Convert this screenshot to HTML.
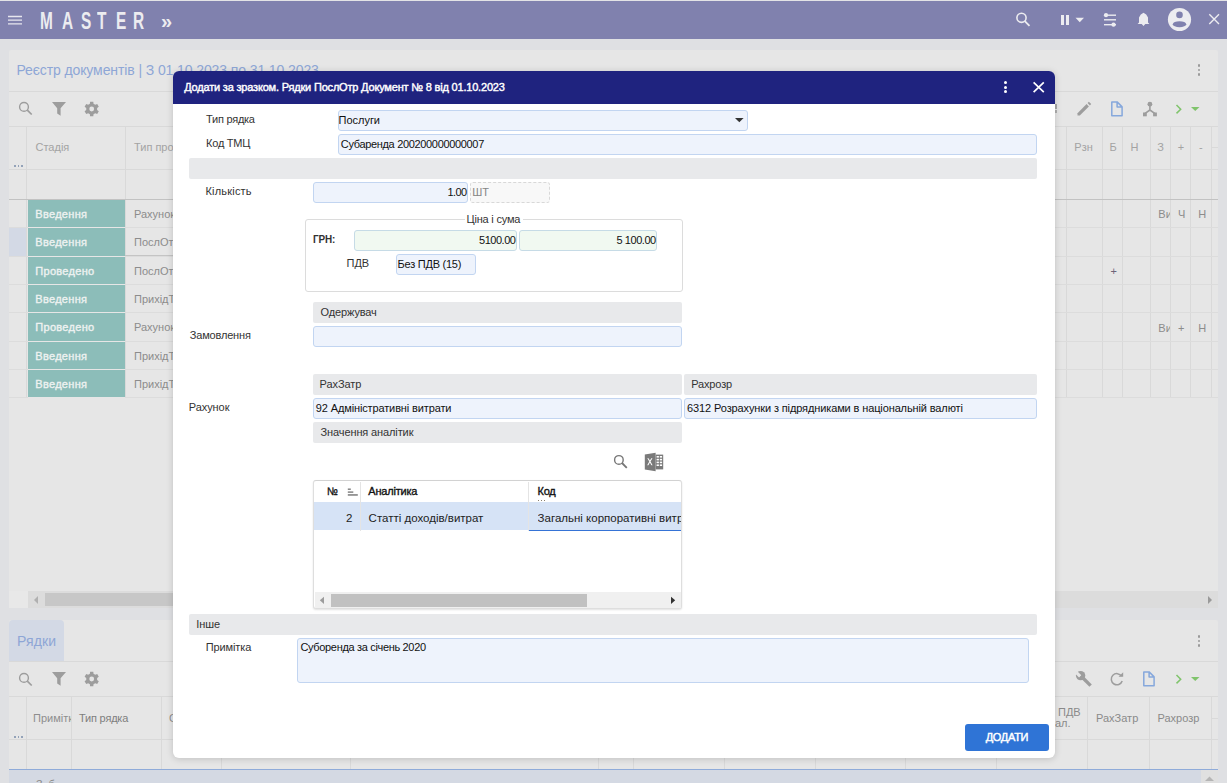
<!DOCTYPE html>
<html><head><meta charset="utf-8"><style>
html,body{margin:0;padding:0;width:1227px;height:783px;overflow:hidden;background:#dfe0e3;}
body{position:relative;font-family:"Liberation Sans",sans-serif;}
.r{position:absolute;display:block}
.t{position:absolute;white-space:nowrap;line-height:20px;font-family:"Liberation Sans",sans-serif}
</style></head><body>
<div class="r" style="left:0;top:0;width:1227px;height:1px;background:#e3e3e6"></div>
<div class="r" style="left:0px;top:1px;width:1227px;height:38px;background:#8081ae;"></div>
<svg class="r" style="left:8px;top:14px;" width="14" height="12" viewBox="0 0 14 12"><path d="M0 2.5H14M0 6.1H14M0 9.8H14" stroke="#e6e6ee" stroke-width="1.3"/></svg>
<div class="t" style="left:39.8px;top:8px;font-size:23px;line-height:26px;font-weight:bold;color:#ececf0;transform:scaleX(0.67);transform-origin:0 0">M</div>
<div class="t" style="left:61.8px;top:8px;font-size:23px;line-height:26px;font-weight:bold;color:#ececf0;transform:scaleX(0.67);transform-origin:0 0">A</div>
<div class="t" style="left:80.5px;top:8px;font-size:23px;line-height:26px;font-weight:bold;color:#ececf0;transform:scaleX(0.67);transform-origin:0 0">S</div>
<div class="t" style="left:97.2px;top:8px;font-size:23px;line-height:26px;font-weight:bold;color:#ececf0;transform:scaleX(0.67);transform-origin:0 0">T</div>
<div class="t" style="left:115.60000000000001px;top:8px;font-size:23px;line-height:26px;font-weight:bold;color:#ececf0;transform:scaleX(0.67);transform-origin:0 0">E</div>
<div class="t" style="left:133.3px;top:8px;font-size:23px;line-height:26px;font-weight:bold;color:#ececf0;transform:scaleX(0.67);transform-origin:0 0">R</div>
<div class="t" style="left:161px;top:10px;font-size:20px;line-height:22px;font-weight:bold;color:#ececf0;">&raquo;</div>
<svg class="r" style="left:1014px;top:11px;" width="18" height="17" viewBox="0 0 18 17"><circle cx="7.5" cy="6.8" r="4.6" fill="none" stroke="#ececf0" stroke-width="1.6"/><line x1="10.8" y1="10.2" x2="15.5" y2="14.8" stroke="#ececf0" stroke-width="1.8"/></svg>
<div class="r" style="left:1061px;top:15.2px;width:3px;height:9.5px;background:#ececf0;"></div>
<div class="r" style="left:1066px;top:15.2px;width:3px;height:9.5px;background:#ececf0;"></div>
<svg class="r" style="left:1075px;top:17px;" width="10" height="6" viewBox="0 0 10 6"><polygon points="0.5,0.8 9,0.8 4.75,5.2" fill="#ececf0"/></svg>
<svg class="r" style="left:1102px;top:12px;" width="16" height="15" viewBox="0 0 16 15"><line x1="2" y1="3.2" x2="14" y2="3.2" stroke="#ececf0" stroke-width="1.4"/><line x1="2" y1="7.8" x2="14" y2="7.8" stroke="#ececf0" stroke-width="1.4"/><line x1="2" y1="12.7" x2="14" y2="12.7" stroke="#ececf0" stroke-width="1.4"/><circle cx="4" cy="3.2" r="2.1" fill="#ececf0"/><circle cx="11.5" cy="12.7" r="2.1" fill="#ececf0"/></svg>
<svg class="r" style="left:1136px;top:11px;" width="15" height="17" viewBox="0 0 15 17"><path d="M7.5 1.8L4.8 3.6 3 6.4V11.6L1.6 13.1H13.4L12 11.6V6.4L10.2 3.6z M5.7 13H9.3L7.5 15z" fill="#ececf0"/></svg>
<svg class="r" style="left:1167px;top:7px;" width="25" height="25" viewBox="0 0 25 25"><circle cx="12.5" cy="12.5" r="11.6" fill="#ececf0"/><circle cx="12.5" cy="7.9" r="3.3" fill="#8081ae"/><ellipse cx="12.5" cy="17.2" rx="6.7" ry="3.0" fill="#8081ae"/></svg>
<svg class="r" style="left:1207px;top:12px;" width="14" height="14" viewBox="0 0 14 14"><path d="M2.3 2.3L12 12M12 2.3L2.3 12" stroke="#ececf0" stroke-width="1.4"/></svg>
<div class="r" style="left:9px;top:50px;width:1209px;height:558px;background:#e6e6e6;border-radius:2px"></div>
<div class="t" style="left:16.4px;top:60px;font-size:14px;color:#8ea6d6;letter-spacing:-0.1px;">Реєстр документів | З 01.10.2023 по 31.10.2023</div>
<div class="r" style="left:1197.7px;top:64.0px;width:2.6px;height:2.6px;border-radius:50%;background:#9a9a9a"></div>
<div class="r" style="left:1197.7px;top:68.60000000000001px;width:2.6px;height:2.6px;border-radius:50%;background:#9a9a9a"></div>
<div class="r" style="left:1197.7px;top:73.2px;width:2.6px;height:2.6px;border-radius:50%;background:#9a9a9a"></div>
<div class="r" style="left:9px;top:91px;width:1209px;height:1px;background:#d9d9d9;"></div>
<svg class="r" style="left:17px;top:100px;" width="18" height="17" viewBox="0 0 18 17"><circle cx="7" cy="6.9" r="4.4" fill="none" stroke="#9d9d9d" stroke-width="1.4"/><line x1="10.3" y1="10.2" x2="14.7" y2="14.5" stroke="#9d9d9d" stroke-width="1.7"/></svg>
<svg class="r" style="left:51px;top:101px;" width="16" height="16" viewBox="0 0 16 16"><path d="M1 1h14L9.6 7.2V14.8L6.2 12.5V7.2z" fill="#9d9d9d"/></svg>
<svg class="r" style="left:84px;top:101px;" width="16" height="16" viewBox="0 0 16 16"><g transform="translate(1.2,0)"><path d="M11.9 8.9a4.7 4.7 0 0 0 0-1.8l1.7-1.3-1.6-2.8-2 .8a4.6 4.6 0 0 0-1.6-.9L8.1.8H4.9l-.3 2.1a4.6 4.6 0 0 0-1.6.9l-2-.8L-.6 5.8 1.1 7.1a4.7 4.7 0 0 0 0 1.8L-.6 10.2l1.6 2.8 2-.8a4.6 4.6 0 0 0 1.6.9l.3 2.1h3.2l.3-2.1a4.6 4.6 0 0 0 1.6-.9l2 .8 1.6-2.8zM6.5 10.4a2.4 2.4 0 1 1 0-4.8 2.4 2.4 0 0 1 0 4.8z" fill="#9d9d9d"/></g></svg>
<div class="r" style="left:9px;top:126px;width:1209px;height:1px;background:#d9d9d9;"></div>
<svg class="r" style="left:1076px;top:101px;" width="16" height="16" viewBox="0 0 16 16"><path d="M1.5 12.2L10.6 3.1l2.3 2.3-9.1 9.1H1.5z" fill="#9d9d9d"/><path d="M11.6 2.1l1.3-1.3 2.3 2.3-1.3 1.3z" fill="#9d9d9d"/></svg>
<svg class="r" style="left:1110px;top:100px;" width="15" height="18" viewBox="0 0 15 18"><path d="M1.8 1.9h5.3l5 5v8.9H1.8z M7.1 1.9v5h5" fill="none" stroke="#86a8dc" stroke-width="1.5" stroke-linejoin="round"/></svg>
<svg class="r" style="left:1142px;top:101px;" width="16" height="16" viewBox="0 0 16 16"><circle cx="7.9" cy="3.2" r="2.4" fill="#9d9d9d"/><path d="M7.9 4v5L2.8 12.6M7.9 9l5.1 3.6" stroke="#9d9d9d" stroke-width="1.6" fill="none"/><rect x="1" y="11.5" width="3.8" height="3.8" fill="#9d9d9d"/><rect x="11.1" y="11.5" width="3.8" height="3.8" fill="#9d9d9d"/></svg>
<svg class="r" style="left:1175px;top:104px;" width="8" height="10" viewBox="0 0 8 10"><path d="M1.5 1l4.2 4.2-4.2 4.2" stroke="#80c46c" stroke-width="1.5" fill="none"/></svg>
<svg class="r" style="left:1190px;top:106px;" width="11" height="6" viewBox="0 0 11 6"><polygon points="1,0.9 9.5,0.9 5.25,5" fill="#80c46c"/></svg>
<div class="r" style="left:1055px;top:103.5px;width:2px;height:5.0px;background:#a8a8a8;"></div>
<div class="r" style="left:1055px;top:110px;width:1.5px;height:3px;background:#b0b0b0;"></div>
<div class="r" style="left:9px;top:169px;width:1209px;height:1px;background:#d9d9d9;"></div>
<div class="r" style="left:26px;top:127px;width:1px;height:271px;background:#d9d9d9;"></div>
<div class="r" style="left:125px;top:127px;width:1px;height:271px;background:#d9d9d9;"></div>
<div class="r" style="left:1066px;top:127px;width:1px;height:271px;background:#d9d9d9;"></div>
<div class="r" style="left:1102px;top:127px;width:1px;height:271px;background:#d9d9d9;"></div>
<div class="r" style="left:1122px;top:127px;width:1px;height:271px;background:#d9d9d9;"></div>
<div class="r" style="left:1150px;top:127px;width:1px;height:271px;background:#d9d9d9;"></div>
<div class="r" style="left:1170px;top:127px;width:1px;height:271px;background:#d9d9d9;"></div>
<div class="r" style="left:1190px;top:127px;width:1px;height:271px;background:#d9d9d9;"></div>
<div class="r" style="left:1211px;top:127px;width:1px;height:271px;background:#d9d9d9;"></div>
<div class="r" style="left:9px;top:199px;width:1209px;height:1px;background:#c2c2c2;"></div>
<div class="r" style="left:1211px;top:147px;width:7px;height:1px;background:#d9d9d9;"></div>
<div class="t" style="left:35.5px;top:137px;font-size:11px;color:#a3a3a3;">Стадія</div>
<div class="t" style="left:134px;top:137px;font-size:11px;color:#a3a3a3;">Тип про</div>
<div class="t" style="left:1074.3px;top:137px;font-size:11px;color:#a3a3a3;">Рзн</div>
<div class="t" style="left:1109.5px;top:137px;font-size:11px;color:#a3a3a3;">Б</div>
<div class="t" style="left:1130.5px;top:137px;font-size:11px;color:#a3a3a3;">Н</div>
<div class="t" style="left:1157.3px;top:137px;font-size:11px;color:#a3a3a3;">З</div>
<div class="t" style="left:1177.7px;top:137px;font-size:11px;color:#a3a3a3;">+</div>
<div class="t" style="left:1198.9px;top:137px;font-size:11px;color:#a3a3a3;">-</div>
<div class="r" style="left:14.3px;top:165.4px;width:1.5999999999999996px;height:1.5999999999999943px;background:#93a2b8;"></div>
<div class="r" style="left:17.6px;top:165.4px;width:1.6000000000000014px;height:1.5999999999999943px;background:#93a2b8;"></div>
<div class="r" style="left:21.0px;top:165.4px;width:1.6000000000000014px;height:1.5999999999999943px;background:#93a2b8;"></div>
<div class="r" style="left:9px;top:227px;width:1209px;height:1px;background:#dcdcdc;"></div>
<div class="r" style="left:28px;top:200px;width:97px;height:27px;background:#8cbdb9;"></div>
<div class="r" style="left:28px;top:227px;width:97px;height:1px;background:#e6e6e6;"></div>
<div class="t" style="left:35.3px;top:204px;font-size:11px;color:#eef2f1;letter-spacing:0.3px;-webkit-text-stroke:0.35px #eef2f1">Введення</div>
<div class="t" style="left:134px;top:204px;font-size:11px;color:#8c8c8c;">Рахунок</div>
<div class="r" style="left:9px;top:228px;width:17px;height:28px;background:#d3d9e5;"></div>
<div class="r" style="left:125px;top:255px;width:48px;height:1px;background:#c4c4c4;"></div>
<div class="r" style="left:9px;top:256px;width:1209px;height:1px;background:#dcdcdc;"></div>
<div class="r" style="left:28px;top:228px;width:97px;height:28px;background:#8cbdb9;"></div>
<div class="r" style="left:28px;top:256px;width:97px;height:1px;background:#e6e6e6;"></div>
<div class="t" style="left:35.3px;top:232px;font-size:11px;color:#eef2f1;letter-spacing:0.3px;-webkit-text-stroke:0.35px #eef2f1">Введення</div>
<div class="t" style="left:134px;top:232px;font-size:11px;color:#8c8c8c;">ПослОтр</div>
<div class="r" style="left:9px;top:284px;width:1209px;height:1px;background:#dcdcdc;"></div>
<div class="r" style="left:28px;top:257px;width:97px;height:27px;background:#8cbdb9;"></div>
<div class="r" style="left:28px;top:284px;width:97px;height:1px;background:#e6e6e6;"></div>
<div class="t" style="left:35.3px;top:261px;font-size:11px;color:#eef2f1;letter-spacing:0.3px;-webkit-text-stroke:0.35px #eef2f1">Проведено</div>
<div class="t" style="left:134px;top:261px;font-size:11px;color:#8c8c8c;">ПослОтр</div>
<div class="r" style="left:9px;top:312px;width:1209px;height:1px;background:#dcdcdc;"></div>
<div class="r" style="left:28px;top:285px;width:97px;height:27px;background:#8cbdb9;"></div>
<div class="r" style="left:28px;top:312px;width:97px;height:1px;background:#e6e6e6;"></div>
<div class="t" style="left:35.3px;top:289px;font-size:11px;color:#eef2f1;letter-spacing:0.3px;-webkit-text-stroke:0.35px #eef2f1">Введення</div>
<div class="t" style="left:134px;top:289px;font-size:11px;color:#8c8c8c;">ПрихідТ</div>
<div class="r" style="left:9px;top:341px;width:1209px;height:1px;background:#dcdcdc;"></div>
<div class="r" style="left:28px;top:313px;width:97px;height:28px;background:#8cbdb9;"></div>
<div class="r" style="left:28px;top:341px;width:97px;height:1px;background:#e6e6e6;"></div>
<div class="t" style="left:35.3px;top:317px;font-size:11px;color:#eef2f1;letter-spacing:0.3px;-webkit-text-stroke:0.35px #eef2f1">Проведено</div>
<div class="t" style="left:134px;top:317px;font-size:11px;color:#8c8c8c;">Рахунок</div>
<div class="r" style="left:9px;top:369px;width:1209px;height:1px;background:#dcdcdc;"></div>
<div class="r" style="left:28px;top:342px;width:97px;height:27px;background:#8cbdb9;"></div>
<div class="r" style="left:28px;top:369px;width:97px;height:1px;background:#e6e6e6;"></div>
<div class="t" style="left:35.3px;top:346px;font-size:11px;color:#eef2f1;letter-spacing:0.3px;-webkit-text-stroke:0.35px #eef2f1">Введення</div>
<div class="t" style="left:134px;top:346px;font-size:11px;color:#8c8c8c;">ПрихідТ</div>
<div class="r" style="left:9px;top:397px;width:1209px;height:1px;background:#dcdcdc;"></div>
<div class="r" style="left:28px;top:370px;width:97px;height:27px;background:#8cbdb9;"></div>
<div class="r" style="left:28px;top:397px;width:97px;height:1px;background:#e6e6e6;"></div>
<div class="t" style="left:35.3px;top:374px;font-size:11px;color:#eef2f1;letter-spacing:0.3px;-webkit-text-stroke:0.35px #eef2f1">Введення</div>
<div class="t" style="left:134px;top:374px;font-size:11px;color:#8c8c8c;">ПрихідТ</div>
<div class="t" style="left:1158.3px;top:204px;font-size:11px;color:#8c8c8c;width:11.5px;overflow:hidden">Ви</div>
<div class="t" style="left:1178px;top:204px;font-size:11px;color:#8c8c8c;">Ч</div>
<div class="t" style="left:1198.3px;top:204px;font-size:11px;color:#8c8c8c;">Н</div>
<div class="t" style="left:1110.5px;top:261px;font-size:11px;color:#6c6478;">+</div>
<div class="t" style="left:1158.3px;top:318px;font-size:11px;color:#8c8c8c;width:11.5px;overflow:hidden">Ви</div>
<div class="t" style="left:1178px;top:318px;font-size:11px;color:#8c8c8c;">+</div>
<div class="t" style="left:1198.3px;top:318px;font-size:11px;color:#8c8c8c;">Н</div>
<div class="r" style="left:9px;top:591px;width:1209px;height:17px;background:#dcdcdc;"></div>
<div class="r" style="left:9px;top:591px;width:19px;height:17px;background:#e8e8e8;"></div>
<svg class="r" style="left:32px;top:594px;" width="8" height="12" viewBox="0 0 8 12"><polygon points="6,2 6,10 2,6" fill="#b0b0b0"/></svg>
<div class="r" style="left:45px;top:593px;width:655px;height:13px;background:#c7c7c7;"></div>
<svg class="r" style="left:1206px;top:594px;" width="8" height="12" viewBox="0 0 8 12"><polygon points="2,2 2,10 6,6" fill="#9a9a9a"/></svg>
<div class="r" style="left:9px;top:620px;width:1209px;height:163px;background:#e6e6e6;border-radius:2px 2px 0 0"></div>
<div class="r" style="left:9px;top:620px;width:55px;height:41px;background:#d3d9e5;border-radius:4px 4px 0 0"></div>
<div class="t" style="left:16.9px;top:631px;font-size:14px;color:#8ea6d6;letter-spacing:0.15px;">Рядки</div>
<div class="r" style="left:1197.7px;top:635.0px;width:2.6px;height:2.6px;border-radius:50%;background:#9a9a9a"></div>
<div class="r" style="left:1197.7px;top:639.6px;width:2.6px;height:2.6px;border-radius:50%;background:#9a9a9a"></div>
<div class="r" style="left:1197.7px;top:644.2px;width:2.6px;height:2.6px;border-radius:50%;background:#9a9a9a"></div>
<div class="r" style="left:9px;top:661px;width:1209px;height:1px;background:#d9d9d9;"></div>
<svg class="r" style="left:17px;top:671px;" width="18" height="17" viewBox="0 0 18 17"><circle cx="7" cy="6.9" r="4.4" fill="none" stroke="#9d9d9d" stroke-width="1.4"/><line x1="10.3" y1="10.2" x2="14.7" y2="14.5" stroke="#9d9d9d" stroke-width="1.7"/></svg>
<svg class="r" style="left:51px;top:671px;" width="16" height="16" viewBox="0 0 16 16"><path d="M1 1h14L9.6 7.2V14.8L6.2 12.5V7.2z" fill="#9d9d9d"/></svg>
<svg class="r" style="left:84px;top:671px;" width="16" height="16" viewBox="0 0 16 16"><g transform="translate(1.2,0)"><path d="M11.9 8.9a4.7 4.7 0 0 0 0-1.8l1.7-1.3-1.6-2.8-2 .8a4.6 4.6 0 0 0-1.6-.9L8.1.8H4.9l-.3 2.1a4.6 4.6 0 0 0-1.6.9l-2-.8L-.6 5.8 1.1 7.1a4.7 4.7 0 0 0 0 1.8L-.6 10.2l1.6 2.8 2-.8a4.6 4.6 0 0 0 1.6.9l.3 2.1h3.2l.3-2.1a4.6 4.6 0 0 0 1.6-.9l2 .8 1.6-2.8zM6.5 10.4a2.4 2.4 0 1 1 0-4.8 2.4 2.4 0 0 1 0 4.8z" fill="#9d9d9d"/></g></svg>
<svg class="r" style="left:1074px;top:670px;" width="20" height="18" viewBox="0 0 20 18"><circle cx="6.6" cy="5.6" r="4.7" fill="#9d9d9d"/><rect x="2.6" y="1.6" width="3.2" height="5.6" fill="#e6e6e6" transform="rotate(-45 4.2 4.4)"/><line x1="7" y1="6" x2="16.6" y2="15.6" stroke="#9d9d9d" stroke-width="3.4"/></svg>
<svg class="r" style="left:1109px;top:671px;" width="16" height="16" viewBox="0 0 16 16"><path d="M12.6 5.2A5.6 5.6 0 1 0 13.2 10" stroke="#9d9d9d" stroke-width="1.5" fill="none"/><polygon points="9.5,5.8 14.2,5.8 14.2,1.2" fill="#9d9d9d"/></svg>
<svg class="r" style="left:1142px;top:670px;" width="15" height="18" viewBox="0 0 15 18"><path d="M1.8 1.9h5.3l5 5v8.9H1.8z M7.1 1.9v5h5" fill="none" stroke="#86a8dc" stroke-width="1.5" stroke-linejoin="round"/></svg>
<svg class="r" style="left:1175px;top:674px;" width="8" height="10" viewBox="0 0 8 10"><path d="M1.5 1l4.2 4.2-4.2 4.2" stroke="#80c46c" stroke-width="1.5" fill="none"/></svg>
<svg class="r" style="left:1190px;top:676px;" width="11" height="6" viewBox="0 0 11 6"><polygon points="1,0.9 9.5,0.9 5.25,5" fill="#80c46c"/></svg>
<div class="r" style="left:9px;top:696px;width:1209px;height:1px;background:#d9d9d9;"></div>
<div class="r" style="left:9px;top:739px;width:1209px;height:1px;background:#d9d9d9;"></div>
<div class="r" style="left:26px;top:697px;width:1px;height:86px;background:#d9d9d9;"></div>
<div class="r" style="left:71px;top:697px;width:1px;height:86px;background:#d9d9d9;"></div>
<div class="r" style="left:161px;top:697px;width:1px;height:86px;background:#d9d9d9;"></div>
<div class="r" style="left:221px;top:697px;width:1px;height:86px;background:#d9d9d9;"></div>
<div class="r" style="left:350px;top:697px;width:1px;height:86px;background:#d9d9d9;"></div>
<div class="r" style="left:598px;top:697px;width:1px;height:86px;background:#d9d9d9;"></div>
<div class="r" style="left:633px;top:697px;width:1px;height:86px;background:#d9d9d9;"></div>
<div class="r" style="left:724px;top:697px;width:1px;height:86px;background:#d9d9d9;"></div>
<div class="r" style="left:815px;top:697px;width:1px;height:86px;background:#d9d9d9;"></div>
<div class="r" style="left:905px;top:697px;width:1px;height:86px;background:#d9d9d9;"></div>
<div class="r" style="left:996px;top:697px;width:1px;height:86px;background:#d9d9d9;"></div>
<div class="r" style="left:1087px;top:697px;width:1px;height:86px;background:#d9d9d9;"></div>
<div class="r" style="left:1149px;top:697px;width:1px;height:86px;background:#d9d9d9;"></div>
<div class="r" style="left:1211px;top:697px;width:1px;height:86px;background:#d9d9d9;"></div>
<div class="t" style="left:33px;top:708px;font-size:11px;color:#8e8e8e;width:38px;overflow:hidden">Примітка</div>
<div class="t" style="left:79px;top:708px;font-size:11px;color:#7e7e7e;letter-spacing:-0.2px;">Тип рядка</div>
<div class="t" style="left:169px;top:708px;font-size:11px;color:#8e8e8e;">С</div>
<div class="t" style="left:1058px;top:702px;font-size:11px;color:#8a8a8a;">ПДВ</div>
<div class="t" style="left:1055px;top:713px;font-size:11px;color:#8a8a8a;">ал.</div>
<div class="r" style="left:1211px;top:718px;width:7px;height:1px;background:#d9d9d9;"></div>
<div class="t" style="left:1096px;top:708px;font-size:11px;color:#8a8a8a;">РахЗатр</div>
<div class="t" style="left:1157.5px;top:708px;font-size:11px;color:#8a8a8a;">Рахрозр</div>
<div class="r" style="left:14.3px;top:736.4px;width:1.5999999999999996px;height:1.6000000000000227px;background:#93a2b8;"></div>
<div class="r" style="left:17.6px;top:736.4px;width:1.6000000000000014px;height:1.6000000000000227px;background:#93a2b8;"></div>
<div class="r" style="left:21.0px;top:736.4px;width:1.6000000000000014px;height:1.6000000000000227px;background:#93a2b8;"></div>
<div class="r" style="left:9px;top:769px;width:1209px;height:14px;background:#d4d9e3;"></div>
<div class="r" style="left:9px;top:768.8px;width:1209px;height:1.2000000000000455px;background:#8fabd9;"></div>
<div class="r" style="left:1201px;top:770px;width:17px;height:13px;background:#e0e0e0;"></div>
<svg class="r" style="left:1204px;top:775px;" width="11" height="7" viewBox="0 0 11 7"><polygon points="1,6 10,6 5.5,1.5" fill="#b5b5b5"/></svg>
<div class="t" style="left:36px;top:774px;font-size:11px;color:#8c8c8c;">З</div>
<div class="t" style="left:48.5px;top:774px;font-size:11px;color:#8c8c8c;">б</div>
<div class="r" style="left:173px;top:71px;width:882px;height:686.5px;background:#fff;border-radius:6px;box-shadow:0 1px 7px rgba(0,0,0,0.17);overflow:hidden"></div>
<div class="r" style="left:173px;top:71px;width:882px;height:32.5px;background:#1f237f;border-radius:6px 6px 0 0"></div>
<div class="t" style="left:184.2px;top:77px;font-size:11px;color:#fff;letter-spacing:-0.19px;-webkit-text-stroke:0.4px #fff">Додати за зразком. Рядки ПослОтр Документ № 8 від 01.10.2023</div>
<div class="r" style="left:1003.8px;top:80.9px;width:3px;height:3px;border-radius:50%;background:#fff"></div>
<div class="r" style="left:1003.8px;top:85.5px;width:3px;height:3px;border-radius:50%;background:#fff"></div>
<div class="r" style="left:1003.8px;top:90.1px;width:3px;height:3px;border-radius:50%;background:#fff"></div>
<svg class="r" style="left:1031px;top:80px;" width="15" height="14" viewBox="0 0 15 14"><path d="M2.6 2.4L12.8 12.1M12.8 2.4L2.6 12.1" stroke="#fff" stroke-width="1.7"/></svg>
<div class="t" style="left:206.1px;top:109px;font-size:11px;color:#333;letter-spacing:-0.26px;">Тип рядка</div>
<div class="r" style="left:338px;top:110px;width:410px;height:21px;background:#eef3fc;border:1px solid #c2d5f1;border-radius:3px;box-sizing:border-box;"></div>
<div class="t" style="left:338.6px;top:110px;font-size:11px;color:#111;letter-spacing:-0.03px;">Послуги</div>
<svg class="r" style="left:734px;top:117px;" width="11" height="6" viewBox="0 0 11 6"><polygon points="1,1.1 9.6,1.1 5.3,5.3" fill="#333"/></svg>
<div class="t" style="left:206.1px;top:133px;font-size:11px;color:#333;letter-spacing:-0.25px;">Код ТМЦ</div>
<div class="r" style="left:338px;top:134px;width:699px;height:21px;background:#eef3fc;border:1px solid #c2d5f1;border-radius:3px;box-sizing:border-box;"></div>
<div class="t" style="left:340.8px;top:134px;font-size:11px;color:#111;letter-spacing:-0.33px;">Субаренда 200200000000007</div>
<div class="r" style="left:189px;top:158px;width:848px;height:21px;background:#e8e9eb;border-radius:2px"></div>
<div class="t" style="left:205.4px;top:181px;font-size:11px;color:#333;letter-spacing:0.21px;">Кількість</div>
<div class="r" style="left:313px;top:182px;width:155px;height:21px;background:#eef3fc;border:1px solid #c2d5f1;border-radius:3px;box-sizing:border-box;"></div>
<div class="t" style="right:760.4px;top:182px;font-size:11px;color:#111;letter-spacing:-0.6px;">1.00</div>
<div class="r" style="left:470px;top:182px;width:80px;height:21px;background:#f8f8f8;border:1px dashed #d8d8d8;border-radius:3px;box-sizing:border-box"></div>
<div class="t" style="left:472.2px;top:182px;font-size:11px;color:#858585;">ШТ</div>
<div class="r" style="left:305px;top:219px;width:378px;height:73px;border:1px solid #dcdcdc;border-radius:3px;box-sizing:border-box"></div>
<div class="r" style="left:465px;top:214px;width:58px;height:10px;background:#fff;"></div>
<div class="t" style="left:466.5px;top:209px;font-size:11px;color:#333;letter-spacing:-0.2px;">Ціна і сума</div>
<div class="t" style="left:313px;top:229px;font-size:11px;color:#333;font-weight:bold;letter-spacing:-0.1px;transform:scaleX(0.9);transform-origin:0 0">ГРН:</div>
<div class="r" style="left:354px;top:230px;width:163px;height:21px;background:#f1f9f1;border:1px solid #c6dbe6;border-radius:3px;box-sizing:border-box;"></div>
<div class="t" style="right:711.5px;top:230px;font-size:11px;color:#111;letter-spacing:-0.47px;">5100.00</div>
<div class="r" style="left:519px;top:230px;width:138px;height:21px;background:#f1f9f1;border:1px solid #c6dbe6;border-radius:3px;box-sizing:border-box;"></div>
<div class="t" style="right:571.2px;top:230px;font-size:11px;color:#111;letter-spacing:-0.44px;">5 100.00</div>
<div class="t" style="left:346.5px;top:253px;font-size:11px;color:#333;">ПДВ</div>
<div class="r" style="left:396px;top:254px;width:80px;height:21px;background:#eef3fc;border:1px solid #c2d5f1;border-radius:3px;box-sizing:border-box;"></div>
<div class="t" style="left:397.6px;top:254px;font-size:11px;color:#111;letter-spacing:-0.25px;">Без ПДВ (15)</div>
<div class="r" style="left:313px;top:302px;width:369px;height:21px;background:#e8e9eb;border-radius:2px"></div>
<div class="t" style="left:320.6px;top:302px;font-size:11px;color:#333;letter-spacing:-0.13px;">Одержувач</div>
<div class="t" style="left:189.8px;top:325px;font-size:11px;color:#333;letter-spacing:-0.18px;">Замовлення</div>
<div class="r" style="left:313px;top:326px;width:369px;height:21px;background:#eef3fc;border:1px solid #c2d5f1;border-radius:3px;box-sizing:border-box;"></div>
<div class="r" style="left:313px;top:374px;width:369px;height:21px;background:#e8e9eb;border-radius:2px"></div>
<div class="r" style="left:684px;top:374px;width:353px;height:21px;background:#e8e9eb;border-radius:2px"></div>
<div class="t" style="left:319.6px;top:374px;font-size:11px;color:#333;letter-spacing:-0.07px;">РахЗатр</div>
<div class="t" style="left:691.2px;top:374px;font-size:11px;color:#333;letter-spacing:-0.15px;">Рахрозр</div>
<div class="t" style="left:188.8px;top:397px;font-size:11px;color:#333;letter-spacing:-0.07px;">Рахунок</div>
<div class="r" style="left:313px;top:398px;width:369px;height:21px;background:#eef3fc;border:1px solid #c2d5f1;border-radius:3px;box-sizing:border-box;"></div>
<div class="r" style="left:684px;top:398px;width:353px;height:21px;background:#eef3fc;border:1px solid #c2d5f1;border-radius:3px;box-sizing:border-box;"></div>
<div class="t" style="left:315.8px;top:398px;font-size:11px;color:#111;letter-spacing:-0.13px;">92 Адміністративні витрати</div>
<div class="t" style="left:687.1px;top:398px;font-size:11px;color:#111;letter-spacing:-0.12px;">6312 Розрахунки з підрядниками в національній валюті</div>
<div class="r" style="left:313px;top:422px;width:369px;height:21px;background:#e8e9eb;border-radius:2px"></div>
<div class="t" style="left:320.6px;top:422px;font-size:11px;color:#333;letter-spacing:-0.12px;">Значення аналітик</div>
<svg class="r" style="left:612px;top:453px;" width="18" height="17" viewBox="0 0 18 17"><circle cx="6.9" cy="6.9" r="4.3" fill="none" stroke="#777" stroke-width="1.4"/><line x1="10" y1="10" x2="14.8" y2="14.8" stroke="#777" stroke-width="1.8"/></svg>
<svg class="r" style="left:644px;top:452px;" width="20" height="20" viewBox="0 0 20 20"><path d="M0.8 2.6L11.6 0.8V19.2L0.8 17.4z" fill="#7a7a7a"/><path d="M3.3 6.2l1.2 0 1.4 2.4 1.4-2.4 1.2 0-2 3.4 2.1 3.6-1.2 0-1.5-2.6-1.5 2.6-1.2 0 2.1-3.6z" fill="#fff"/><rect x="11.6" y="2.6" width="7.6" height="14.8" fill="#7a7a7a"/><g fill="#fff"><rect x="12.6" y="4" width="2.3" height="1.6"/><rect x="15.8" y="4" width="2.3" height="1.6"/><rect x="12.6" y="6.8" width="2.3" height="1.6"/><rect x="15.8" y="6.8" width="2.3" height="1.6"/><rect x="12.6" y="9.6" width="2.3" height="1.6"/><rect x="15.8" y="9.6" width="2.3" height="1.6"/><rect x="12.6" y="12.4" width="2.3" height="1.6"/><rect x="15.8" y="12.4" width="2.3" height="1.6"/></g></svg>
<div class="r" style="left:313px;top:480px;width:369px;height:129px;background:#fff;border:1px solid #dedede;border-top-color:#d2d2d2;border-radius:3px;box-sizing:border-box;box-shadow:0 1px 2px rgba(0,0,0,0.12)"></div>
<div class="r" style="left:314px;top:502px;width:367px;height:28px;background:#d6e3f6;"></div>
<div class="r" style="left:360px;top:481.5px;width:1px;height:49.5px;background:#e4e4e4;"></div>
<div class="r" style="left:528px;top:481.5px;width:1px;height:49.5px;background:#e4e4e4;"></div>
<div class="r" style="left:529px;top:529.5px;width:151.5px;height:1.7000000000000455px;background:#3573d6;"></div>
<div class="t" style="left:326.7px;top:481px;font-size:11px;color:#111;-webkit-text-stroke:0.35px #111;transform:scaleX(0.92);transform-origin:0 0">№</div>
<svg class="r" style="left:347px;top:488px;" width="12" height="8" viewBox="0 0 12 8"><rect x="0.8" y="0.5" width="3" height="1.4" fill="#7c7c7c"/><rect x="0.8" y="3.4" width="5.5" height="1.4" fill="#7c7c7c"/><rect x="0.8" y="6.2" width="10" height="1.5" fill="#7c7c7c"/></svg>
<div class="t" style="left:368.3px;top:481px;font-size:11px;color:#111;letter-spacing:-0.2px;-webkit-text-stroke:0.35px #111">Аналітика</div>
<div class="t" style="left:537.6px;top:481px;font-size:11px;color:#111;letter-spacing:-0.3px;-webkit-text-stroke:0.35px #111">Код</div>
<div class="r" style="left:538px;top:499.5px;width:1.2999999999999545px;height:1.3000000000000114px;background:#8a8070;"></div>
<div class="r" style="left:541px;top:499.5px;width:1.2999999999999545px;height:1.3000000000000114px;background:#8a8070;"></div>
<div class="r" style="left:544px;top:499.5px;width:1.2999999999999545px;height:1.3000000000000114px;background:#8a8070;"></div>
<div class="t" style="right:874.5px;top:508px;font-size:11.5px;color:#222;">2</div>
<div class="t" style="left:368.6px;top:508px;font-size:11.5px;color:#222;">Статті доходів/витрат</div>
<div class="t" style="left:537.6px;top:508px;font-size:11.5px;color:#222;width:143.5px;overflow:hidden;letter-spacing:0px">Загальні корпоративні витрати</div>
<div class="r" style="left:314.5px;top:592px;width:366.0px;height:16px;background:#f0f0f0;"></div>
<svg class="r" style="left:318px;top:595px;" width="8" height="11" viewBox="0 0 8 11"><polygon points="6,1.7 6,9 1.8,5.35" fill="#9c9c9c"/></svg>
<div class="r" style="left:331px;top:594px;width:256px;height:13px;background:#c1c1c1;"></div>
<svg class="r" style="left:669px;top:595px;" width="8" height="11" viewBox="0 0 8 11"><polygon points="2,1.7 2,9 6.2,5.35" fill="#333"/></svg>
<div class="r" style="left:189px;top:614px;width:848px;height:21px;background:#e8e9eb;border-radius:2px"></div>
<div class="t" style="left:196.3px;top:614px;font-size:11px;color:#333;letter-spacing:-0.1px;">Інше</div>
<div class="t" style="left:205.7px;top:637px;font-size:11px;color:#333;letter-spacing:-0.11px;">Примітка</div>
<div class="r" style="left:297px;top:638px;width:732px;height:45px;background:#eef3fc;border:1px solid #c2d5f1;border-radius:3px;box-sizing:border-box;"></div>
<div class="t" style="left:300.4px;top:637px;font-size:11px;color:#111;letter-spacing:-0.33px;">Суборенда за січень 2020</div>
<div class="r" style="left:965px;top:724px;width:84px;height:27px;background:#2f74d6;border-radius:3px"></div>
<div class="t" style="left:985.7px;top:727px;font-size:11px;color:#fff;letter-spacing:-0.3px;-webkit-text-stroke:0.45px #fff">ДОДАТИ</div>
</body></html>
